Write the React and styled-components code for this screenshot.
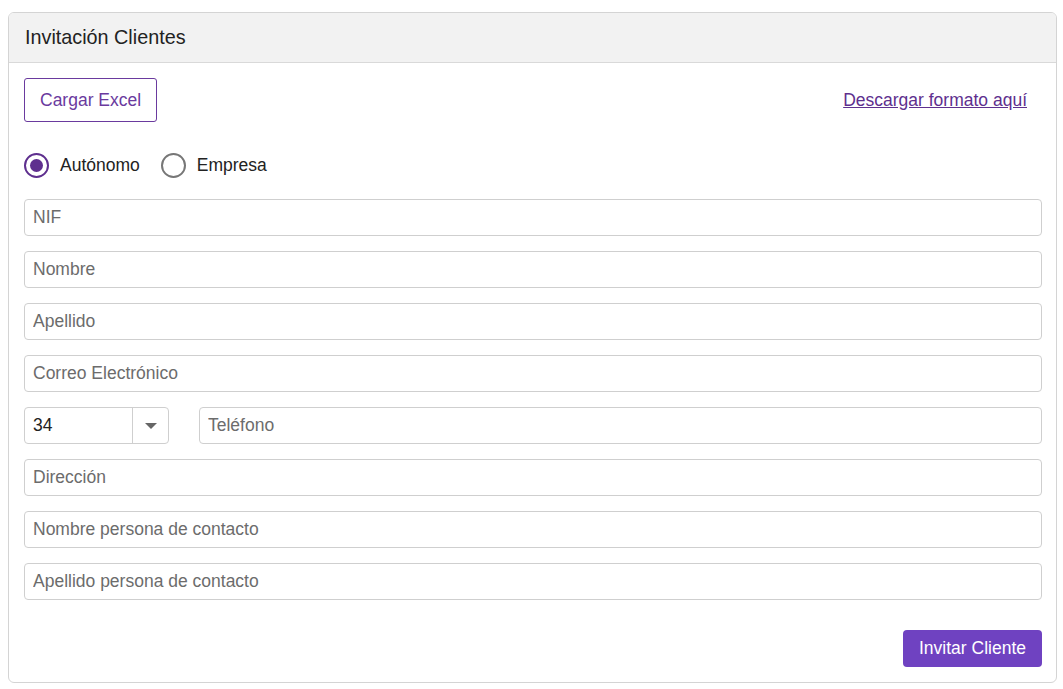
import React, { useState } from "react";
import styled, { createGlobalStyle } from "styled-components";

const Global = createGlobalStyle`
  body {
    margin: 0;
    background: #fff;
    font-family: "Liberation Sans", Arial, sans-serif;
    color: #212529;
  }
  * { box-sizing: border-box; }
`;

const Page = styled.div`
  padding: 12px 6px 6px 8px;
`;

const Card = styled.div`
  border: 1px solid #d4d4d4;
  border-radius: 6px;
  overflow: hidden;
  background: #fff;
`;

const CardHeader = styled.div`
  height: 50px;
  background: #f2f2f2;
  border-bottom: 1px solid #d9d9d9;
  display: flex;
  align-items: center;
  padding: 0 16px;
  font-size: 19.8px;
  color: #222;
`;

const CardBody = styled.div`
  padding: 15px 14px 15px 15px;
  display: flex;
  flex-direction: column;
`;

const TopRow = styled.div`
  display: flex;
  justify-content: space-between;
  align-items: center;
  padding-right: 15px;
`;

const OutlineButton = styled.button`
  height: 44px;
  padding: 0 15px;
  background: #fff;
  border: 1px solid #6a3a9e;
  border-radius: 3px;
  color: #6a3a9e;
  font-family: inherit;
  font-size: 17.5px;
`;

const DownloadLink = styled.a`
  color: #5e2f8e;
  font-size: 17.5px;
  text-decoration: underline;
`;

const RadioRow = styled.div`
  display: flex;
  align-items: center;
  gap: 21px;
  margin: 31px 0 21px;
`;

const RadioLabel = styled.label`
  display: flex;
  align-items: center;
  gap: 11px;
  font-size: 17.5px;
  color: #222;
  cursor: pointer;
`;

const RadioCircle = styled.span`
  width: 25px;
  height: 25px;
  border-radius: 50%;
  border: 2px solid ${(p) => (p.$checked ? "#5e2f8e" : "#777")};
  display: flex;
  align-items: center;
  justify-content: center;
  &::after {
    content: "";
    width: 13px;
    height: 13px;
    border-radius: 50%;
    background: ${(p) => (p.$checked ? "#5e2f8e" : "transparent")};
  }
`;

const Fields = styled.div`
  display: flex;
  flex-direction: column;
  gap: 15px;
`;

const Input = styled.input`
  width: 100%;
  height: 37px;
  border: 1px solid #cfcfcf;
  border-radius: 4px;
  padding: 0 8px;
  font-family: inherit;
  font-size: 17.5px;
  color: #222;
  outline: none;
  &::placeholder {
    color: #6c6c6c;
  }
`;

const PhoneRow = styled.div`
  display: flex;
  gap: 30px;
`;

const SelectBox = styled.div`
  width: 145px;
  flex-shrink: 0;
  height: 37px;
  border: 1px solid #cfcfcf;
  border-radius: 4px;
  display: flex;
  align-items: center;
  font-size: 17.5px;
  color: #222;
`;

const SelectValue = styled.span`
  flex: 1;
  padding-left: 8px;
`;

const SelectArrow = styled.span`
  width: 36px;
  height: 100%;
  border-left: 1px solid #cfcfcf;
  display: flex;
  align-items: center;
  justify-content: center;
  &::after {
    content: "";
    border-left: 6px solid transparent;
    border-right: 6px solid transparent;
    border-top: 6px solid #666;
  }
`;

const Footer = styled.div`
  display: flex;
  justify-content: flex-end;
  margin-top: 30px;
`;

const PrimaryButton = styled.button`
  height: 37px;
  padding: 0 16px;
  background: #6f42c1;
  color: #fff;
  border: none;
  border-radius: 4px;
  font-family: inherit;
  font-size: 17.5px;
`;

export default function App() {
  const [tipo, setTipo] = useState("autonomo");
  const fields = ["NIF", "Nombre", "Apellido", "Correo Electrónico"];
  const fields2 = [
    "Dirección",
    "Nombre persona de contacto",
    "Apellido persona de contacto",
  ];
  return (
    <>
      <Global />
      <Page>
        <Card>
          <CardHeader>Invitación Clientes</CardHeader>
          <CardBody>
            <TopRow>
              <OutlineButton>Cargar Excel</OutlineButton>
              <DownloadLink href="#">Descargar formato aquí</DownloadLink>
            </TopRow>
            <RadioRow>
              <RadioLabel onClick={() => setTipo("autonomo")}>
                <RadioCircle $checked={tipo === "autonomo"} />
                Autónomo
              </RadioLabel>
              <RadioLabel onClick={() => setTipo("empresa")}>
                <RadioCircle $checked={tipo === "empresa"} />
                Empresa
              </RadioLabel>
            </RadioRow>
            <Fields>
              {fields.map((f) => (
                <Input key={f} placeholder={f} />
              ))}
              <PhoneRow>
                <SelectBox>
                  <SelectValue>34</SelectValue>
                  <SelectArrow />
                </SelectBox>
                <Input placeholder="Teléfono" />
              </PhoneRow>
              {fields2.map((f) => (
                <Input key={f} placeholder={f} />
              ))}
            </Fields>
            <Footer>
              <PrimaryButton>Invitar Cliente</PrimaryButton>
            </Footer>
          </CardBody>
        </Card>
      </Page>
    </>
  );
}
